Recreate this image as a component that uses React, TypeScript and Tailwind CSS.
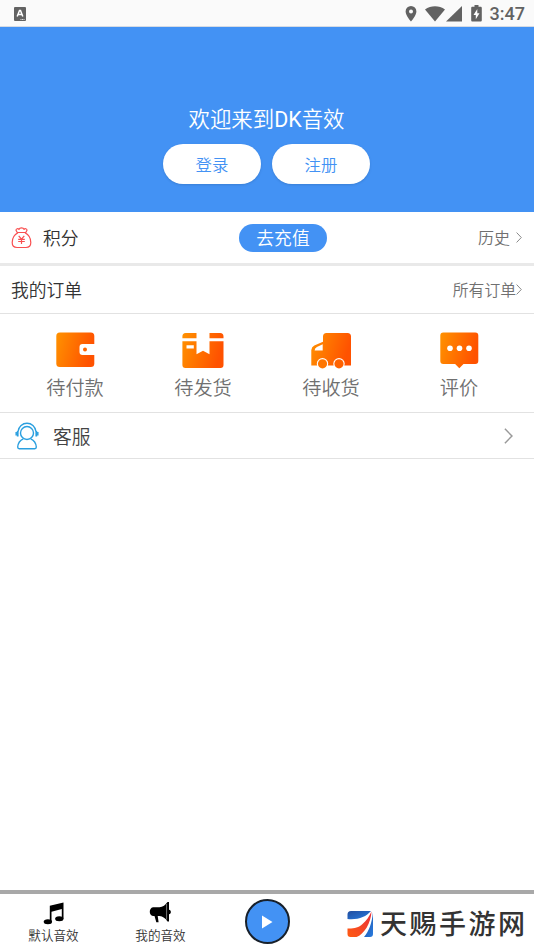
import type { ReactNode } from 'react'

interface OrderItem {
  label: string
  icon: ReactNode
}

const Chevron = ({ className }: { className: string }) => (
  <svg viewBox="0 0 6 12" preserveAspectRatio="none" className={className} fill="none" stroke="currentColor">
    <path d="M.6.6 5.3 6 .6 11.4" vectorEffect="non-scaling-stroke" />
  </svg>
)

const OrangeGradient = ({ id }: { id: string }) => (
  <defs>
    <linearGradient id={id} x1="0" y1="0" x2="1" y2="0.25">
      <stop offset="0" stopColor="#ff9200" />
      <stop offset="1" stopColor="#ff5200" />
    </linearGradient>
  </defs>
)

const WalletIcon = () => (
  <svg width="44" height="40" viewBox="0 0 44 40">
    <OrangeGradient id="wallet" />
    <rect x="3.300" y="2.500" width="38" height="34.500" rx="3.500" fill="url(#wallet)" />
    <path fill="#fff" d="M29.500 14h13v11h-13a3 3 0 0 1-3-3v-5a3 3 0 0 1 3-3Z" />
    <circle cx="32" cy="19.500" r="2" fill="#ff6500" />
  </svg>
)

const BoxIcon = () => (
  <svg width="44" height="40" viewBox="0 0 44 40">
    <OrangeGradient id="box" />
    <path
      fill="url(#box)"
      fillRule="evenodd"
      d="M4.700 3H15.500v5.200H1.400V6.400A3.400 3.400 0 0 1 4.700 3ZM28.500 3H39.200a3.400 3.400 0 0 1 3.300 3.400v1.800h-14ZM1.400 11.300H15.500v12.900l6.500-3.400 6.500 3.400V11.300h14V35a3 3 0 0 1-3 3H4.400a3 3 0 0 1-3-3ZM5.500 15.300v3.300h7.300v-3.300Z"
    />
  </svg>
)

const TruckIcon = () => (
  <svg width="44" height="40" viewBox="0 0 44 40">
    <OrangeGradient id="truck" />
    <path
      fill="url(#truck)"
      fillRule="evenodd"
      d="M17.500 3h21a3.500 3.500 0 0 1 3.500 3.500V35.500H2.300V20a6 6 0 0 1 3-4.500L14 11.700V6.500A3.500 3.500 0 0 1 17.500 3Zm-3.800 11.300-5.800 2.600a4 4 0 0 0-2.300 3.600h8.100Z"
    />
    <circle cx="13.500" cy="33.800" r="5.700" fill="#fff" />
    <circle cx="30" cy="33.800" r="5.700" fill="#fff" />
    <circle cx="13.500" cy="33.800" r="4.600" fill="#ff7600" />
    <circle cx="30" cy="33.800" r="4.600" fill="#ff6200" />
  </svg>
)

const CommentIcon = () => (
  <svg width="44" height="40" viewBox="0 0 44 40">
    <OrangeGradient id="comment" />
    <path
      fill="url(#comment)"
      d="M6.300 2.500h32a3 3 0 0 1 3 3V31a3 3 0 0 1-3 3H26.500l-4.200 4.300-4.200-4.300H6.300a3 3 0 0 1-3-3V5.500a3 3 0 0 1 3-3Z"
    />
    <circle cx="13" cy="18.200" r="2.800" fill="#fff" />
    <circle cx="22.500" cy="18.200" r="2.800" fill="#fff" />
    <circle cx="32" cy="18.200" r="2.800" fill="#fff" />
  </svg>
)

const MoneyBagIcon = () => (
  <svg width="22" height="22" viewBox="0 0 22 22" fill="none" stroke="#f94f50" strokeWidth="1.200" strokeLinejoin="round">
    <path d="M7 5.800C2.800 8 1.200 12 1.200 15.500c0 3.300 1.600 5 4.800 5h9c3.200 0 4.800-1.700 4.800-5 0-3.500-1.600-7.500-5.800-9.700" />
    <path d="M6.500 6 5 3.300c0-1.800 2.200-2 3-.9.600-2 4.400-2 5 0 .8-1.100 3-.9 3 .9L14.500 6M6.500 5.500h8" />
    <path d="m7.700 8.800 2.800 3.300 2.800-3.300M7.200 12.300h6.600M7.200 14.500h6.600M10.500 12.100V17" />
  </svg>
)

const ServiceIcon = () => (
  <svg width="24" height="28" viewBox="0 0 24 28" fill="none" stroke="#2a9fdf" strokeWidth="1.400">
    <circle cx="12" cy="11" r="6.500" />
    <path d="M3 9.500C3.800 4.700 7.400 1.300 12 1.300s8.200 3.400 9 8.200" />
    <path d="M2.700 9v5.500M21.300 9v5.500" strokeWidth="1.800" />
    <path d="M1.200 10v3.500M22.800 10v3.500" strokeWidth="1.500" />
    <path d="M8.300 16.800c-3.300 1.400-5.300 4.300-5.600 8.200 0 1.200.6 1.700 1.500 1.700h15.600c.9 0 1.500-.5 1.500-1.700-.3-3.900-2.300-6.800-5.600-8.200" />
  </svg>
)

const SiteLogo = () => (
  <svg width="28" height="28" viewBox="0 0 28 28">
    <defs>
      <linearGradient id="logoBlue" x1="0" y1="0" x2="1" y2="1">
        <stop offset="0" stopColor="#214d9f" />
        <stop offset="1" stopColor="#287ce0" />
      </linearGradient>
      <linearGradient id="logoRed" x1="0" y1="1" x2="1" y2="0">
        <stop offset="0" stopColor="#ff5b12" />
        <stop offset="1" stopColor="#e9303b" />
      </linearGradient>
    </defs>
    <path fill="url(#logoBlue)" d="M5 1h20C20 7 12 10 1.500 9V4.500A3.500 3.500 0 0 1 5 1Z" />
    <path fill="url(#logoRed)" d="M1.500 18.500c6.500.2 11-.800 15-4.500 4-3.500 7-8 9-12.500C25 13 18 24.500 10.500 27H4.500a3 3 0 0 1-3-3Z" />
    <path fill="url(#logoBlue)" d="M27 2.500V24c0 2-1 3-3 3h-6c5-5.500 7.800-14 9-24.500Z" />
  </svg>
)

const orders: OrderItem[] = [
  { label: '待付款', icon: <WalletIcon /> },
  { label: '待发货', icon: <BoxIcon /> },
  { label: '待收货', icon: <TruckIcon /> },
  { label: '评价', icon: <CommentIcon /> }
]

const StatusBar = () => (
  <div className="flex h-[27px] shrink-0 items-center justify-between border-b border-[#d5dbe4] bg-[#fafafa] pt-px pr-[9px] pl-3.5 text-[#626262]">
    <svg width="12" height="14" viewBox="0 0 12 14">
      <rect width="12" height="14" rx="1" fill="currentColor" />
      <path d="m3.200 9.500 2.300-6h1l2.300 6M4.100 7.600h3.800" fill="none" stroke="#fff" strokeWidth="1.500" />
      <path d="M6.500 12.500H11" stroke="#fff" strokeWidth=".8" strokeDasharray="1 .5" />
    </svg>
    <div className="flex h-full items-center">
      <svg width="12" height="16" viewBox="0 0 12 16" className="mr-[8px]">
        <path
          fill="currentColor"
          fillRule="evenodd"
          d="M6 0a5.400 5.400 0 0 0-5.400 5.400C.600 9.500 6 15.500 6 15.500s5.400-6 5.400-10.100A5.400 5.400 0 0 0 6 0Zm0 3.500a2 2 0 1 1 0 4 2 2 0 0 1 0-4Z"
        />
      </svg>
      <svg width="20" height="16" viewBox="0 0 20 16" className="mr-[1px]">
        <path fill="currentColor" d="M0 3.500C6-.900 14-.900 20 3.500l-10 12Z" />
      </svg>
      <svg width="16" height="16" viewBox="0 0 16 16" className="mr-[9px]">
        <path fill="currentColor" d="M16 0v15.500H0Z" />
      </svg>
      <svg width="11" height="17" viewBox="0 0 11 17" className="mr-2">
        <path fill="currentColor" d="M3.500 0h4v1.700h2c.8 0 1.300.5 1.300 1.300v12.200c0 .8-.5 1.300-1.300 1.300h-8c-.8 0-1.300-.5-1.300-1.300V3c0-.8.5-1.300 1.300-1.300h2Z" />
        <path fill="#fff" d="M6.300 4 2.500 10h2.300v4.300l3.700-6H6.300Z" />
      </svg>
      <span className="pt-px font-[Roboto] text-[18px] leading-none font-medium">3:47</span>
    </div>
  </div>
)

const App = () => {
  return (
    <div className="flex h-[950px] w-[534px] flex-col overflow-hidden bg-white font-['Roboto','Noto_Sans_CJK_SC',sans-serif] font-[350] text-[#333]">
      <StatusBar />

      <header className="flex h-[185px] shrink-0 flex-col items-center bg-[#4392f4] pt-[77px]">
        <h1 className="pr-px text-[21.400px] leading-8 font-[350] text-white">
          欢迎来到<span className="font-normal">DK</span>音效
        </h1>
        <div className="mt-[8px] flex gap-[11px] pr-px">
          {['登录', '注册'].map((label) => (
            <button key={label} className="h-10 w-[98px] rounded-full bg-white pt-1 text-[16.400px] text-[#4392f4] shadow-sm">
              {label}
            </button>
          ))}
        </div>
      </header>

      <section className="grid h-[54px] shrink-0 grid-cols-[239px_88px_1fr] items-center border-b-3 border-[#e9e9e9]">
        <div className="flex items-center pl-[11px] text-[17.800px]">
          <MoneyBagIcon />
          <span className="ml-2.5 pt-[3px]">积分</span>
        </div>
        <button className="h-7 rounded-full bg-[#4392f4] pt-px text-[17.800px] leading-7 text-white">去充值</button>
        <div className="flex items-center justify-end pr-3 text-[16px] text-[#707070]">
          <span className="pt-0.5">历史</span>
          <Chevron className="ml-1.5 h-[11px] w-[6px] text-[#8a8a8a]" />
        </div>
      </section>

      <section className="flex h-[48px] shrink-0 items-center justify-between border-b border-[#e2e2e2] pr-3 pl-[11px]">
        <h2 className="pt-[3px] text-[17.800px] font-[350]">我的订单</h2>
        <div className="flex items-center text-[15.800px] text-[#707070]">
          <span className="pt-0.5">所有订单</span>
          <Chevron className="h-[11px] w-[6px] text-[#8a8a8a]" />
        </div>
      </section>

      <section className="grid h-[99px] shrink-0 grid-cols-4 border-b border-[#e2e2e2] px-[11px] pt-4">
        {orders.map((item) => (
          <div key={item.label} className="flex flex-col items-center">
            {item.icon}
            <span className="mt-[5px] text-[19.200px] leading-7 text-[#707070]">{item.label}</span>
          </div>
        ))}
      </section>

      <section className="flex h-[46px] shrink-0 items-center border-b border-[#e2e2e2] pr-[21px] pl-[15px]">
        <ServiceIcon />
        <span className="ml-[14px] pt-[5px] text-[18.800px] text-[#444]">客服</span>
        <Chevron className="ml-auto h-[16px] w-[9px] stroke-[1.500px] text-[#999]" />
      </section>

      <nav className="mt-auto grid h-[60px] shrink-0 grid-cols-[107px_107px_106px_1fr] border-t-4 border-[#a8a8a8]">
        <div className="flex flex-col items-center pt-[7px]">
          <svg width="22" height="24" viewBox="0 0 22 24">
            <path d="M6.800 4.700 20.500 1.500v16.300h-1.700V8L8.500 10.800v10H6.800Z" />
            <ellipse cx="4.900" cy="20.700" rx="4.200" ry="2.500" />
            <ellipse cx="16.300" cy="17.700" rx="4.200" ry="2.500" />
          </svg>
          <span className="mt-px text-[12.600px] leading-5">默认音效</span>
        </div>
        <div className="flex flex-col items-center pt-[7px]">
          <svg width="24" height="24" viewBox="0 0 24 24">
            <path d="M4 6.300h6.500c3.300-.3 6-2.200 8-5.300H20v7.800c2.500.3 2.500 4.200 0 4.500v7.200h-1.500c-2-3.200-4.700-5.200-8-5.500H8.700l.9 6.200H7.300L5.500 15H4C-.3 14-.3 7.300 4 6.300Z" />
            <path d="M17.600 3v15.500" stroke="#aaa" strokeWidth=".7" />
          </svg>
          <span className="mt-px text-[12.600px] leading-5">我的音效</span>
        </div>
        <div className="flex justify-center pt-[5px]">
          <div className="flex size-[45px] items-center justify-center rounded-full border-2 border-[#18202a] bg-[#4392f4]">
            <svg width="12" height="14" viewBox="0 0 12 14">
              <path fill="#fff" d="M1 .5 11.500 7 1 13.500Z" />
            </svg>
          </div>
        </div>
        <div className="flex items-center pt-[4px] pl-[26px]">
          <SiteLogo />
          <span className="ml-[6px] pt-[2px] text-[27px] leading-none font-medium tracking-[2.500px] whitespace-nowrap">天赐手游网</span>
        </div>
      </nav>
    </div>
  )
}

export default App
